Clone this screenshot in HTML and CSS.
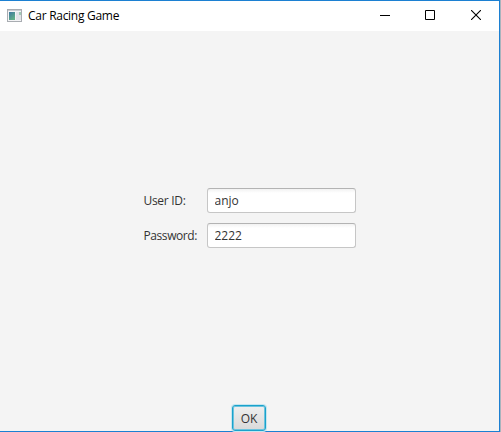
FILE: index.html
```html
<!DOCTYPE html>
<html lang="en">
<head>
<meta charset="utf-8">
<title>Car Racing Game</title>
<link rel="stylesheet" href="styles.css">
</head>
<body>
<div class="window">
  <header class="titlebar">
    <svg class="app-icon" width="16" height="13" viewBox="0 0 16 13">
      <defs>
        <linearGradient id="pane" x1="0" y1="0" x2="0.6" y2="1">
          <stop offset="0" stop-color="#3e78a0"/>
          <stop offset="1" stop-color="#62b087"/>
        </linearGradient>
      </defs>
      <rect x="0.5" y="0.5" width="14" height="12" fill="#f4f4f6" stroke="#a9adb2"/>
      <path d="M1 1.5h13" stroke="#c9ccd1"/>
      <rect x="2" y="3" width="6" height="8" fill="url(#pane)"/>
      <rect x="9" y="3" width="3" height="8" fill="#e2e3e8"/>
      <rect x="12" y="3" width="2" height="3" fill="#9fc9b4"/>
      <rect x="12" y="6" width="2" height="5" fill="#e2e3e8"/>
    </svg>
    <h1 class="title">Car Racing Game</h1>
    <div class="controls">
      <svg width="10" height="10" viewBox="0 0 10 10"><path d="M0 5.5h10" stroke="#000"/></svg>
      <svg width="10" height="10" viewBox="0 0 10 10"><path d="M.5.5h9v9h-9z" fill="none" stroke="#000"/></svg>
      <svg width="10" height="10" viewBox="0 0 10 10"><path d="M0 0L10 10M10 0L0 10" stroke="#000" stroke-width="1.1"/></svg>
    </div>
  </header>
  <main class="content">
    <form class="login">
      <label class="label label-user" for="user">User ID:</label>
      <input class="field" id="user" type="text" value="anjo">
      <label class="label" for="password">Password:</label>
      <input class="field" id="password" type="text" value="2222">
    </form>
    <button class="ok" type="button">OK</button>
  </main>
</div>
</body>
</html>
```
FILE: styles.css
```css
* {
  box-sizing: border-box;
}

body {
  margin: 0;
  background: #a9b4bd;
  font: 12px/16px "Open Sans", "Noto Sans", sans-serif;
  overflow: hidden;
}

.window {
  display: flex;
  flex-direction: column;
  width: 500px;
  height: 432px;
  border: 1px solid #1c80d2;
  border-left: 0;
  background: #f4f4f4;
}

.titlebar {
  display: flex;
  align-items: center;
  flex: none;
  height: 30px;
  padding: 0 18px 2px 7px;
  background: #fff;
}

.title {
  margin: 2px 0 0 5px;
  color: #000;
  font-size: 12px;
  font-weight: 400;
  letter-spacing: -0.28px;
}

.controls {
  display: flex;
  gap: 36px;
  margin-left: auto;
}

.controls svg {
  display: block;
}

.controls svg:first-child {
  margin-right: -1px;
}

.content {
  display: flex;
  flex: 1;
  flex-direction: column;
  align-items: center;
  justify-content: space-between;
  padding: 157px 1px 0 0;
}

.login {
  display: grid;
  grid-template-columns: 53px 149px;
  gap: 10px;
  align-items: center;
  width: 212px;
  margin-left: 1px;
}

.label {
  color: #333;
  letter-spacing: -0.42px;
  white-space: nowrap;
}

.label-user {
  letter-spacing: -0.3px;
}

.field {
  width: 149px;
  height: 25px;
  margin: 0;
  padding: 0 7px 1px;
  border: 1px solid #c6c6c6;
  border-top-color: #b3b3b3;
  border-radius: 3px;
  outline: 0;
  background: linear-gradient(#f2f2f2, #fff 4px);
  color: #333;
  font: inherit;
}

.ok {
  width: 34px;
  height: 26px;
  margin: 0;
  padding: 1px 0 0;
  border: 1px solid #1aa2cb;
  border-radius: 3px;
  background: linear-gradient(#efefef, #d9d9d9);
  box-shadow: inset 0 0 0 1px #6cc3de, 0 0 0 1px #c5e6f0;
  color: #333;
  font: inherit;
  letter-spacing: -0.2px;
}
```
